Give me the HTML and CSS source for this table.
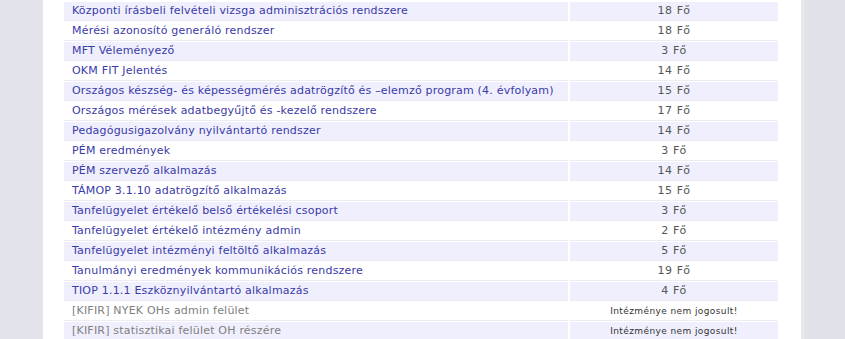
FILE: index.html
```html
<!DOCTYPE html>
<html lang="hu">
<head>
<meta charset="utf-8">
<title>Alkalmazások</title>
<link rel="stylesheet" href="styles.css">
</head>
<body>
<div class="page">
  <div class="side side-left"></div>
  <div class="content">
    <table class="apps">
      <tbody>
        <tr class="odd"><td class="name"><a href="#">Központi írásbeli felvételi vizsga adminisztrációs rendszere</a></td><td class="count">18 Fő</td></tr>
        <tr class="even"><td class="name"><a href="#">Mérési azonosító generáló rendszer</a></td><td class="count">18 Fő</td></tr>
        <tr class="odd"><td class="name"><a href="#">MFT Véleményező</a></td><td class="count">3 Fő</td></tr>
        <tr class="even"><td class="name"><a href="#">OKM FIT Jelentés</a></td><td class="count">14 Fő</td></tr>
        <tr class="odd"><td class="name"><a href="#">Országos készség- és képességmérés adatrögzítő és –elemző program (4. évfolyam)</a></td><td class="count">15 Fő</td></tr>
        <tr class="even"><td class="name"><a href="#">Országos mérések adatbegyűjtő és -kezelő rendszere</a></td><td class="count">17 Fő</td></tr>
        <tr class="odd"><td class="name"><a href="#">Pedagógusigazolvány nyilvántartó rendszer</a></td><td class="count">14 Fő</td></tr>
        <tr class="even"><td class="name"><a href="#">PÉM eredmények</a></td><td class="count">3 Fő</td></tr>
        <tr class="odd"><td class="name"><a href="#">PÉM szervező alkalmazás</a></td><td class="count">14 Fő</td></tr>
        <tr class="even"><td class="name"><a href="#">TÁMOP 3.1.10 adatrögzítő alkalmazás</a></td><td class="count">15 Fő</td></tr>
        <tr class="odd"><td class="name"><a href="#">Tanfelügyelet értékelő belső értékelési csoport</a></td><td class="count">3 Fő</td></tr>
        <tr class="even"><td class="name"><a href="#">Tanfelügyelet értékelő intézmény admin</a></td><td class="count">2 Fő</td></tr>
        <tr class="odd"><td class="name"><a href="#">Tanfelügyelet intézményi feltöltő alkalmazás</a></td><td class="count">5 Fő</td></tr>
        <tr class="even"><td class="name"><a href="#">Tanulmányi eredmények kommunikációs rendszere</a></td><td class="count">19 Fő</td></tr>
        <tr class="odd"><td class="name"><a href="#">TIOP 1.1.1 Eszköznyilvántartó alkalmazás</a></td><td class="count">4 Fő</td></tr>
        <tr class="even"><td class="name disabled">[KIFIR] NYEK OHs admin felület</td><td class="count note">Intézménye nem jogosult!</td></tr>
        <tr class="odd"><td class="name disabled">[KIFIR] statisztikai felület OH részére</td><td class="count note">Intézménye nem jogosult!</td></tr>
      </tbody>
    </table>
  </div>
  <div class="side side-right"></div>
</div>
</body>
</html>
```
FILE: styles.css
```css
html, body {
  margin: 0;
  padding: 0;
  background: #e3e3eb;
}
.page {
  display: flex;
  width: 845px;
  height: 339px;
  overflow: hidden;
  font-family: "DejaVu Sans", Verdana, sans-serif;
  font-size: 11px;
  letter-spacing: 0.2px;
}
.side-left {
  width: 43px;
  flex: none;
  background: #e3e3eb;
}
.content {
  width: 758px;
  flex: none;
  background: #ffffff;
  padding: 0 23px 0 21px;
  box-sizing: border-box;
}
.side-right {
  flex: 1;
  background: #e1e1e9;
  border-left: 4px solid #e7e7ee;
}
.apps {
  border-collapse: separate;
  border-spacing: 2px 1px;
  margin: 1px -2px 0 -2px;
  width: 718px;
}
.apps td {
  height: 18px;
  padding: 0 8px;
  border-bottom: 1px solid #ececf2;
  box-sizing: border-box;
  line-height: 18px;
  white-space: nowrap;
}
.apps tr.odd td {
  background: #efeffd;
}
.apps tr.even td {
  background: #ffffff;
}
.apps td.name {
  width: 504px;
}
.apps td.count {
  width: 208px;
  text-align: center;
  color: #555555;
  letter-spacing: 0.6px;
}
.apps a {
  color: #3a3aa8;
  text-decoration: none;
}
.apps td.disabled {
  color: #808080;
}
.apps td.note {
  font-size: 9px;
  color: #333333;
  letter-spacing: 0.4px;
}
```
